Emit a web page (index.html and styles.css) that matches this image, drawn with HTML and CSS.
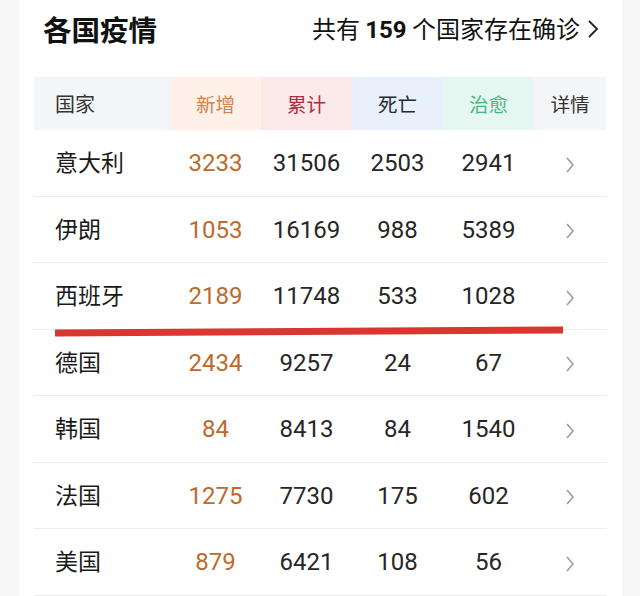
FILE: index.html
```html
<!DOCTYPE html>
<html lang="zh">
<head>
<meta charset="utf-8">
<link rel="stylesheet" href="styles.css">
</head>
<body>
<div class="card">
  <div class="top">
    <h1 class="title">各国疫情</h1>
    <div class="summary"><span class="sum-text">共有 <b>159</b> 个国家存在确诊</span><svg class="chev-big" width="12" height="20" viewBox="0 0 12 20"><path d="M2 2 L10 10 L2 18" fill="none" stroke="#222" stroke-width="1.8"/></svg></div>
  </div>
  <div class="table">
    <div class="row head">
      <div class="c name h-gray">国家</div>
      <div class="c h-new">新增</div>
      <div class="c h-total">累计</div>
      <div class="c h-dead">死亡</div>
      <div class="c h-cure">治愈</div>
      <div class="c h-gray">详情</div>
    </div>
    <div class="row"><div class="c name">意大利</div><div class="c num new">3233</div><div class="c num">31506</div><div class="c num">2503</div><div class="c num">2941</div><div class="c"><svg class="chev" width="10" height="18" viewBox="0 0 10 18"><path d="M2 2 L8 9 L2 16" fill="none" stroke="#9a9a9a" stroke-width="1.5"/></svg></div></div>
    <div class="row"><div class="c name">伊朗</div><div class="c num new">1053</div><div class="c num">16169</div><div class="c num">988</div><div class="c num">5389</div><div class="c"><svg class="chev" width="10" height="18" viewBox="0 0 10 18"><path d="M2 2 L8 9 L2 16" fill="none" stroke="#9a9a9a" stroke-width="1.5"/></svg></div></div>
    <div class="row"><div class="c name">西班牙</div><div class="c num new">2189</div><div class="c num">11748</div><div class="c num">533</div><div class="c num">1028</div><div class="c"><svg class="chev" width="10" height="18" viewBox="0 0 10 18"><path d="M2 2 L8 9 L2 16" fill="none" stroke="#9a9a9a" stroke-width="1.5"/></svg></div></div>
    <div class="row"><div class="c name">德国</div><div class="c num new">2434</div><div class="c num">9257</div><div class="c num">24</div><div class="c num">67</div><div class="c"><svg class="chev" width="10" height="18" viewBox="0 0 10 18"><path d="M2 2 L8 9 L2 16" fill="none" stroke="#9a9a9a" stroke-width="1.5"/></svg></div></div>
    <div class="row"><div class="c name">韩国</div><div class="c num new">84</div><div class="c num">8413</div><div class="c num">84</div><div class="c num">1540</div><div class="c"><svg class="chev" width="10" height="18" viewBox="0 0 10 18"><path d="M2 2 L8 9 L2 16" fill="none" stroke="#9a9a9a" stroke-width="1.5"/></svg></div></div>
    <div class="row"><div class="c name">法国</div><div class="c num new">1275</div><div class="c num">7730</div><div class="c num">175</div><div class="c num">602</div><div class="c"><svg class="chev" width="10" height="18" viewBox="0 0 10 18"><path d="M2 2 L8 9 L2 16" fill="none" stroke="#9a9a9a" stroke-width="1.5"/></svg></div></div>
    <div class="row"><div class="c name">美国</div><div class="c num new">879</div><div class="c num">6421</div><div class="c num">108</div><div class="c num">56</div><div class="c"><svg class="chev" width="10" height="18" viewBox="0 0 10 18"><path d="M2 2 L8 9 L2 16" fill="none" stroke="#9a9a9a" stroke-width="1.5"/></svg></div></div>
  </div>
  <div class="redline"></div>
</div>
</body>
</html>
```
FILE: styles.css
```css
* { box-sizing: border-box; }
html, body { margin: 0; padding: 0; }
body {
  background: #f6f6f6;
  font-family: Roboto, "Noto Sans CJK SC", sans-serif;
  color: #222;
  width: 640px;
  height: 596px;
  overflow: hidden;
}
.card {
  position: relative;
  margin: 0 18px 0 19px;
  background: #fff;
  padding: 0 15px 0 15px;
  height: 620px;
}
.top {
  height: 77px;
  display: flex;
  align-items: flex-start;
  justify-content: space-between;
  padding-top: 9px;
}
.title {
  margin: 0 0 0 9px;
  font-family: "Noto Sans CJK SC", sans-serif;
  font-size: 28.5px;
  font-weight: 700;
  line-height: 40px;
  color: #111;
}
.summary {
  display: flex;
  align-items: center;
  height: 40px;
  margin-right: 8px;
}
.sum-text {
  font-family: "Noto Sans CJK SC", sans-serif;
  font-size: 24px;
  line-height: 40px;
  color: #111;
  white-space: nowrap;
}
.sum-text b { font-family: Roboto, sans-serif; font-weight: 700; font-size: 24px; }
.chev-big { margin-left: 7px; }
.table { display: flex; flex-direction: column; }
.row {
  display: grid;
  grid-template-columns: 136px 91px 91px 91px 91px 72px;
  height: 66.5px;
  border-bottom: 1px solid #ececec;
  align-items: stretch;
}
.row.head { height: 53px; border-bottom: none; }
.c {
  display: flex;
  align-items: center;
  justify-content: center;
  font-size: 24px;
}
.c.name {
  justify-content: flex-start;
  padding-left: 21px;
  padding-bottom: 3px;
  font-family: "Noto Sans CJK SC", sans-serif;
  font-size: 23px;
  color: #1a1a1a;
}
.head .c { font-family: "Noto Sans CJK SC", sans-serif; font-size: 19.5px; padding-bottom: 0; }
.head .c.name { font-size: 20px; color: #333; }
.h-gray { background: #f4f5f6; color: #333; }
.h-new { background: #fff1e9; color: #cf8449; }
.h-total { background: #fbe8e9; color: #a8323e; }
.h-dead { background: #e7f0fb; color: #1e2b3b; }
.h-cure { background: #e6f7f1; color: #45b97a; }
.num { color: #262626; padding-top: 1px; }
.num.new { color: #bd6a2c; }
.chev { margin-top: 4px; }
.redline {
  position: absolute;
  left: 36px;
  top: 328px;
  width: 508px;
  height: 7px;
  background: #d8362e;
  transform: rotate(-0.33deg);
}
```
